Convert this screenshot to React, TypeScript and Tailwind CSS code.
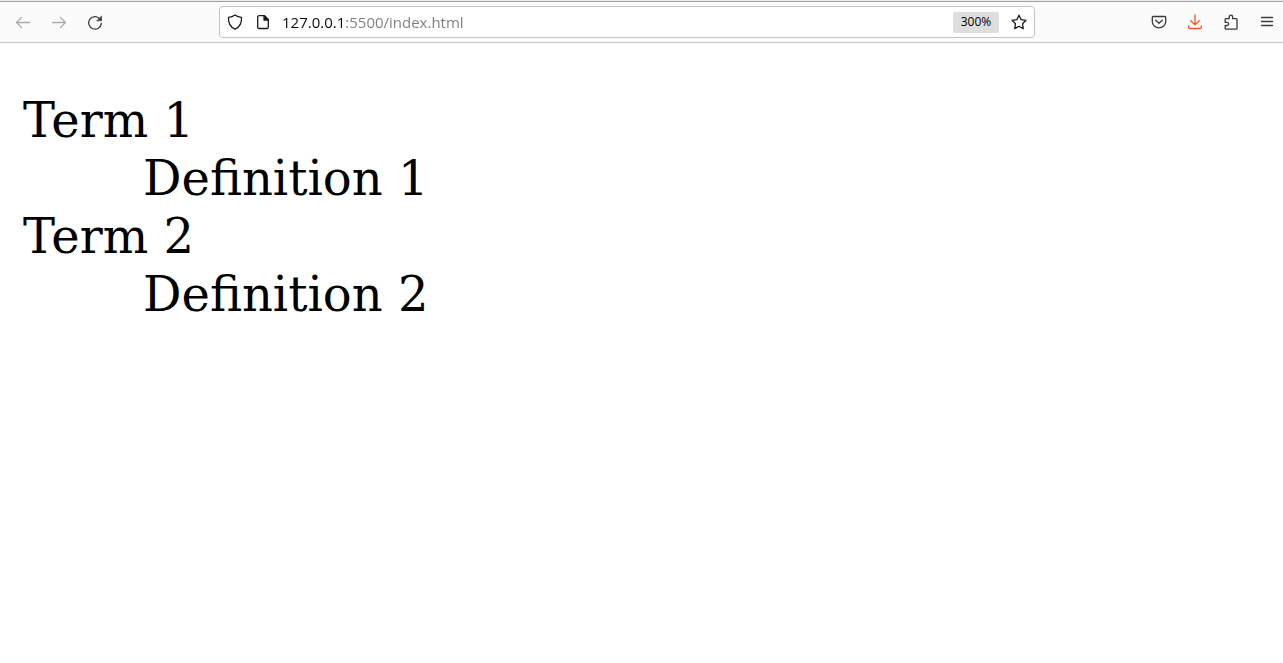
import type { ReactNode } from "react";

type IconProps = { children: ReactNode };

function Icon({ children }: IconProps) {
  return (
    <svg
      viewBox="0 0 16 16"
      className="size-4 shrink-0"
      fill="none"
      stroke="currentColor"
      strokeWidth="1.3"
      strokeLinecap="round"
      strokeLinejoin="round"
      aria-hidden="true"
    >
      {children}
    </svg>
  );
}

type ToolButtonProps = { label: string; className?: string; disabled?: boolean; children: ReactNode };

function ToolButton({ label, className = "text-[#3a3a3a]", disabled, children }: ToolButtonProps) {
  return (
    <button
      type="button"
      aria-label={label}
      disabled={disabled}
      className={`flex size-8 shrink-0 items-center justify-center rounded ${className}`}
    >
      <Icon>{children}</Icon>
    </button>
  );
}

const entries = [
  { term: "Term 1", definition: "Definition 1" },
  { term: "Term 2", definition: "Definition 2" },
];

export default function App() {
  return (
    <div className="min-h-screen bg-white">
      <header className="border-b border-[#c4c4c4] bg-[#fbfbfb]">
        <div className="h-0.5 border-b border-[#a2a2a2] bg-[#ebebeb]" />
        <div className="flex h-10 items-center">
          <nav aria-label="History" className="flex gap-1 pl-[7px]">
            <ToolButton label="Back" disabled className="text-[#acacac]">
              <path d="M1.5 8.5h13M6.5 3.5l-5 5 5 5" />
            </ToolButton>
            <ToolButton label="Forward" disabled className="text-[#acacac]">
              <path d="M1.5 8.5h13M9.5 3.5l5 5-5 5" />
            </ToolButton>
            <ToolButton label="Reload">
              <path d="M13 5a6.3 6.3 0 1 0 1.3 4.4" />
              <path d="M14.6 2.2v4.6H10z" fill="currentColor" strokeWidth="0.6" />
            </ToolButton>
          </nav>
          <form
            onSubmit={(event) => event.preventDefault()}
            className="mx-[108px] flex h-8 min-w-0 flex-1 items-center rounded border border-[#c4c4c4] bg-white px-[7px] text-[#1c1c1c]"
          >
            <button type="button" aria-label="Tracking protection" className="flex">
              <Icon>
                <path d="M8 .9c2 1.5 4.200 2.200 6.500 2.400C14.900 8.500 12.800 13 8 15.200 3.200 13 1.100 8.500 1.500 3.300 3.800 3.100 6 2.400 8 .9z" />
              </Icon>
            </button>
            <button type="button" aria-label="Site information" className="ml-3 flex">
              <Icon>
                <path d="M9.500 1.700H4A1.300 1.300 0 0 0 2.700 3v10.200A1.300 1.300 0 0 0 4 14.500h8a1.300 1.300 0 0 0 1.300-1.300V5.500z" />
                <path d="M9 1.700v4.300h4.300z" fill="currentColor" />
              </Icon>
            </button>
            <input
              type="text"
              aria-label="Address"
              defaultValue="127.0.0.1:5500/index.html"
              spellCheck={false}
              className="ml-[11px] min-w-0 flex-1 bg-[linear-gradient(90deg,#0c0c0c_63px,#7d7d7d_63px)] bg-clip-text font-['Open_Sans',sans-serif] text-[15px] leading-6 text-transparent caret-black outline-none"
            />
            <button
              type="button"
              className="h-[21px] w-[46px] rounded-xs bg-[#dedede] font-['Open_Sans',sans-serif] text-xs leading-5 font-medium text-black"
            >
              300%
            </button>
            <button type="button" aria-label="Bookmark this page" className="ml-3 flex">
              <Icon>
                <path d="M8 1.200l2.100 4.400 4.900.7-3.500 3.400.8 4.900L8 12.300l-4.300 2.300.8-4.900L1 6.300l4.900-.7z" />
              </Icon>
            </button>
          </form>
          <div className="flex gap-1">
            <ToolButton label="Save to Pocket">
              <path d="M2.300 2.500h11.400a1 1 0 0 1 1 1v4a6.700 6.400 0 0 1-13.400 0v-4a1 1 0 0 1 1-1z" />
              <path d="M4.700 6.200L8 9.300l3.300-3.100" />
            </ToolButton>
            <ToolButton label="Downloads" className="text-[#f0521d]">
              <path d="M8 .8v10M3.800 6.700L8 10.900l4.200-4.200M1.700 12v1.300a1.200 1.200 0 0 0 1.200 1.200h10.200a1.200 1.200 0 0 0 1.200-1.200V12" />
            </ToolButton>
            <ToolButton label="Extensions">
              <path d="M2.200 7.400V5.500a.8.800 0 0 1 .8-.8h3.200V2.800a1.700 1.700 0 0 1 3.400 0v1.900h3.600a.8.800 0 0 1 .8.800v8.900a.8.800 0 0 1-.8.800H3a.8.800 0 0 1-.8-.8v-2.900h1.900a1.550 1.550 0 0 0 0-3.100H2.200z" />
            </ToolButton>
            <ToolButton label="Open application menu">
              <path d="M2.500 3.500h11M2.500 7.500h11M2.500 11.500h11" />
            </ToolButton>
          </div>
        </div>
      </header>
      <main className="px-[23px] py-12">
        <dl className="font-['DejaVu_Serif',serif] text-5xl leading-[58px] text-black">
          {entries.map(({ term, definition }) => (
            <div key={term}>
              <dt>{term}</dt>
              <dd className="ml-[120px]">{definition}</dd>
            </div>
          ))}
        </dl>
      </main>
    </div>
  );
}
